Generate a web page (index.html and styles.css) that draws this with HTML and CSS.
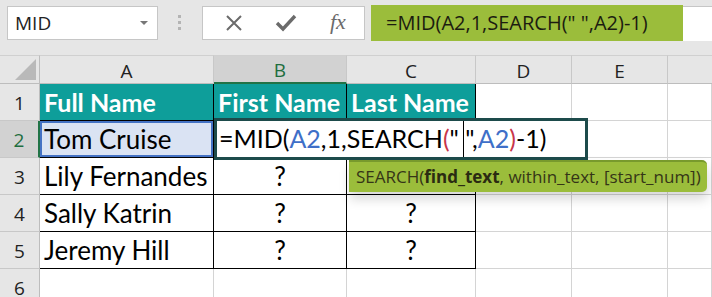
FILE: index.html
```html
<!DOCTYPE html>
<html>
<head>
  <title>MID and SEARCH</title>
  <link rel="stylesheet" href="styles.css">
</head>
<body>
  <div class="toolbar">
    <div class="namebox">
      <span>MID</span>
      <span class="drop"></span>
    </div>
    <div class="grip"><i></i><i></i><i></i></div>
    <div class="buttons">
      <svg class="ico" width="20" height="20" viewBox="0 0 20 20">
        <path d="M3 3 L17 17 M17 3 L3 17" stroke="#6b6b6b" stroke-width="2" fill="none"/>
      </svg>
      <svg class="ico" width="22" height="20" viewBox="0 0 22 20">
        <path d="M2 10 L8 16 L20 3" stroke="#6b6b6b" stroke-width="3.4" fill="none"/>
      </svg>
      <span class="fx">fx</span>
    </div>
    <div class="formula">
      <div class="formula-text">=MID(A2,1,SEARCH(" ",A2)-1)</div>
    </div>
  </div>

  <div class="sheet">
    <div class="corner"><span></span></div>
    <div class="colhead">A</div>
    <div class="colhead active">B</div>
    <div class="colhead">C</div>
    <div class="colhead">D</div>
    <div class="colhead">E</div>
    <div class="colhead last"></div>

    <div class="rowhead">1</div>
    <div class="cell head">Full Name</div>
    <div class="cell head">First Name</div>
    <div class="cell head">Last Name</div>
    <div class="cell"></div>
    <div class="cell"></div>
    <div class="cell"></div>

    <div class="rowhead active">2</div>
    <div class="cell data selected">Tom Cruise</div>
    <div class="cell data"></div>
    <div class="cell data"></div>
    <div class="cell"></div>
    <div class="cell"></div>
    <div class="cell"></div>

    <div class="rowhead">3</div>
    <div class="cell data">Lily Fernandes</div>
    <div class="cell data center">?</div>
    <div class="cell data center"></div>
    <div class="cell"></div>
    <div class="cell"></div>
    <div class="cell"></div>

    <div class="rowhead">4</div>
    <div class="cell data">Sally Katrin</div>
    <div class="cell data center">?</div>
    <div class="cell data center">?</div>
    <div class="cell"></div>
    <div class="cell"></div>
    <div class="cell"></div>

    <div class="rowhead">5</div>
    <div class="cell data">Jeremy Hill</div>
    <div class="cell data center">?</div>
    <div class="cell data center">?</div>
    <div class="cell"></div>
    <div class="cell"></div>
    <div class="cell"></div>

    <div class="rowhead">6</div>
    <div class="cell"></div>
    <div class="cell"></div>
    <div class="cell"></div>
    <div class="cell"></div>
    <div class="cell"></div>
    <div class="cell"></div>

    <!-- cell in edit mode -->
    <div class="editor">=MID(<span class="ref">A2</span>,1,SEARCH<span class="par">(</span>"<span class="caret"></span>",<span class="ref">A2</span><span class="par">)</span>-1)</div>

    <!-- function hint -->
    <div class="hint">SEARCH(<b>find_text</b>, within_text, [start_num])</div>
  </div>
</body>
</html>
```

FILE: styles.css
```css
body, html {
  margin: 0;
  height: 100%;
  background: #fff;
  overflow: hidden;
}

.toolbar {
  display: flex;
  align-items: flex-start;
  height: 55px;
  background: #e6e6e6;
  font-family: "Open Sans", sans-serif;
}

.namebox {
  display: flex;
  align-items: center;
  justify-content: space-between;
  box-sizing: border-box;
  width: 151px;
  height: 34px;
  margin: 6px 0 0 7px;
  padding: 0 9px 0 7px;
  background: #fff;
  border: 1px solid #c6c6c6;
  font-size: 19px;
  color: #222;
}

.drop {
  width: 0;
  height: 0;
  border-left: 4px solid transparent;
  border-right: 4px solid transparent;
  border-top: 4px solid #777;
}

.grip {
  display: flex;
  flex-direction: column;
  gap: 3px;
  margin: 15px 21px 0 20px;
}

.grip i {
  display: block;
  width: 3px;
  height: 3px;
  background: #b4b4b4;
}

.buttons {
  display: flex;
  align-items: center;
  box-sizing: border-box;
  width: 163px;
  height: 34px;
  margin-top: 6px;
  padding-left: 21px;
  background: #fff;
  border: 1px solid #c6c6c6;
}

.ico {
  margin-right: 31px;
}

.fx {
  font-family: "Liberation Serif", serif;
  font-style: italic;
  font-size: 22px;
  color: #6b6b6b;
  margin: -3px 0 0 2px;
}

.formula {
  flex: 1;
  height: 34px;
  margin: 6px 0 0 6px;
  background: #fff;
  border-top: 1px solid #c6c6c6;
}

.formula-text {
  box-sizing: border-box;
  width: 312px;
  height: 36px;
  margin-top: -2px;
  padding: 4px 0 0 15px;
  background: #9bbd3b;
  font-size: 20px;
  color: #1c1c10;
}

.sheet {
  position: relative;
  display: grid;
  grid-template-columns: 40px 174px 133px 129px 96px 96px 1fr;
  grid-template-rows: 29px repeat(6, 37px);
  font-family: Lato, sans-serif;
}

.corner {
  position: relative;
  background: #e6e6e6;
  border-right: 1px solid #bdbdbd;
  border-bottom: 1px solid #bdbdbd;
  border-top: 1px solid #d0d0d0;
}

.corner span {
  position: absolute;
  right: 3px;
  bottom: 3px;
  width: 0;
  height: 0;
  border-left: 21px solid transparent;
  border-bottom: 21px solid #b9b9b9;
}

.colhead {
  display: flex;
  align-items: center;
  justify-content: center;
  background: #e6e6e6;
  border-top: 1px solid #d0d0d0;
  border-right: 1px solid #c8c8c8;
  border-bottom: 1px solid #bdbdbd;
  font-family: "Open Sans", sans-serif;
  font-size: 19px;
  color: #222;
  padding-top: 2px;
}

.colhead.active {
  background: #d2d2d2;
  color: #1e6e3e;
  border-bottom: 2px solid #217346;
}

.colhead.last {
  border-right: none;
}

.rowhead {
  display: flex;
  align-items: center;
  justify-content: center;
  background: #e6e6e6;
  border-right: 1px solid #bdbdbd;
  border-bottom: 1px solid #c8c8c8;
  font-family: "Open Sans", sans-serif;
  font-size: 19px;
  color: #222;
  padding-top: 2px;
}

.rowhead.active {
  background: #d2d2d2;
  color: #1e6e3e;
  border-right: 2px solid #217346;
}

.cell {
  display: flex;
  align-items: center;
  border-right: 1px solid #d4d4d4;
  border-bottom: 1px solid #d4d4d4;
  font-size: 26px;
  color: #000;
  padding-left: 4px;
  white-space: nowrap;
}

.cell.head {
  background: #0e9e9a;
  color: #fff;
  font-weight: bold;
  font-size: 25px;
  border-right: 1.5px solid #000;
  border-bottom: 1.5px solid #000;
}

.cell.data {
  border-right: 1.5px solid #000;
  border-bottom: 1.5px solid #000;
}

.cell.center {
  justify-content: center;
  padding-left: 0;
}

.cell.selected {
  background: #dae3f3;
  box-shadow: inset 0 0 0 2px #4472c4;
}

.editor {
  position: absolute;
  left: 214px;
  top: 63px;
  box-sizing: border-box;
  width: 374px;
  height: 42px;
  padding-left: 2px;
  background: #fff;
  border: 3px solid #1d4b4b;
  font-size: 25px;
  line-height: 35px;
  color: #000;
  white-space: nowrap;
}

.ref {
  color: #3e6fc8;
}

.par {
  color: #c8364a;
}

.caret {
  display: inline-block;
  width: 1.5px;
  height: 36px;
  margin: 0 1px 0 4px;
  vertical-align: top;
  background: #000;
}

.hint {
  position: absolute;
  left: 349px;
  top: 105px;
  box-sizing: border-box;
  width: 358px;
  height: 32px;
  padding: 3px 0 0 7px;
  background: #9bbd3b;
  border-top: 2px solid #789a2c;
  border-radius: 0 5px 5px 0;
  box-shadow: 1px 7px 12px rgba(0, 0, 0, 0.16);
  font-family: "Open Sans", sans-serif;
  font-size: 17px;
  color: #353517;
  white-space: nowrap;
}

.hint b {
  color: #2b2b12;
}
```
